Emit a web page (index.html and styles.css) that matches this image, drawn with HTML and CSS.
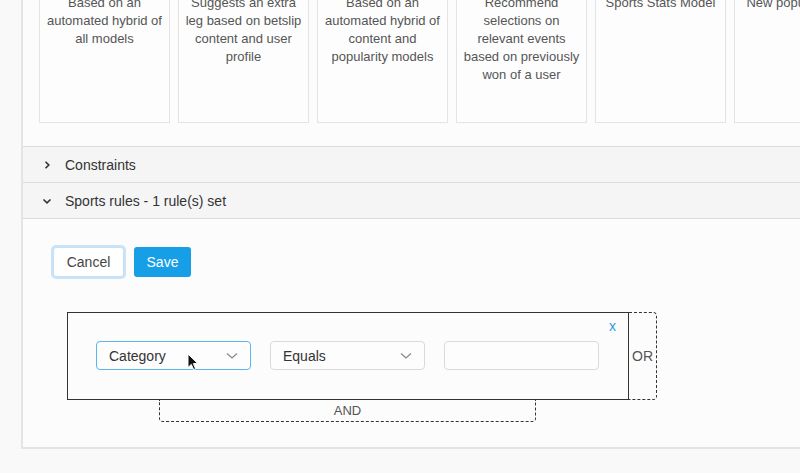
FILE: index.html
```html
<!DOCTYPE html>
<html lang="en">
<head>
  <meta charset="UTF-8">
  <title>Recommendation settings</title>
  <link rel="stylesheet" href="styles.css">
</head>
<body>
<div class="panel">

  <!-- model cards -->
  <div class="cards">
    <div class="card">Based on an automated hybrid of all models</div>
    <div class="card">Suggests an extra leg based on betslip content and user profile</div>
    <div class="card">Based on an automated hybrid of content and popularity models</div>
    <div class="card">Recommend selections on relevant events based on previously won of a user</div>
    <div class="card">Sports Stats Model</div>
    <div class="card">New popular picks</div>
  </div>

  <!-- accordion -->
  <div class="acc-header">
    <svg class="chev" width="10" height="10" viewBox="0 0 10 10"><path d="M3.5 1.8 L6.8 5 L3.5 8.2" fill="none" stroke="#333" stroke-width="1.6"/></svg>
    <span>Constraints</span>
  </div>
  <div class="acc-header open">
    <svg class="chev" width="10" height="10" viewBox="0 0 10 10"><path d="M1.5 3.5 L5 6.8 L8.5 3.5" fill="none" stroke="#333" stroke-width="1.6"/></svg>
    <span>Sports rules - 1 rule(s) set</span>
  </div>

  <div class="acc-body">
    <div class="actions">
      <button class="btn btn-cancel">Cancel</button>
      <button class="btn btn-save">Save</button>
    </div>

    <div class="rules">
      <div class="rule-row">
        <div class="rule-box">
          <span class="rule-close">x</span>
          <div class="select focused">
            <span>Category</span>
            <svg width="12" height="8" viewBox="0 0 12 8"><path d="M1 1.5 L6 6 L11 1.5" fill="none" stroke="#8a8a8a" stroke-width="1.3"/></svg>
          </div>
          <div class="select">
            <span>Equals</span>
            <svg width="12" height="8" viewBox="0 0 12 8"><path d="M1 1.5 L6 6 L11 1.5" fill="none" stroke="#8a8a8a" stroke-width="1.3"/></svg>
          </div>
          <div class="select text-input"></div>
        </div>
        <div class="or-box">OR</div>
      </div>
      <div class="and-box">AND</div>
    </div>
  </div>

</div>

<!-- mouse pointer -->
<svg class="cursor" width="12" height="18" viewBox="0 0 12 18">
  <path d="M1 1 L1 14.5 L4.3 11.4 L6.6 16.6 L8.6 15.7 L6.4 10.6 L10.8 10.6 Z" fill="#111" stroke="#fff" stroke-width="1"/>
</svg>
</body>
</html>
```

FILE: styles.css
```css
body {
  margin: 0;
  font-family: "Liberation Sans", Arial, sans-serif;
  background-color: #f9f9f9;
  overflow: hidden;
  position: relative;
}

.panel {
  margin-left: 21px;
  width: 820px;
  background-color: #fcfcfc;
  border-left: 2px solid #e4e4e4;
  border-bottom: 2px solid #e4e4e4;
}

/* cards are scrolled partly out of view */
.cards {
  display: flex;
  gap: 8px;
  padding: 0 16px;
  margin-top: -40px;
}

.card {
  flex: 0 0 131px;
  box-sizing: border-box;
  height: 163px;
  padding: 33px 3px 0;
  background-color: #fdfdfd;
  border: 1px solid #e4e4e4;
  color: #555;
  font-size: 13px;
  line-height: 18px;
  text-align: center;
}

.acc-header {
  display: flex;
  align-items: center;
  height: 35px;
  background-color: #f5f5f5;
  border-top: 1px solid #dcdcdc;
  color: #333;
  font-size: 14px;
}

.cards + .acc-header {
  margin-top: 23px;
}

.acc-header.open {
  border-bottom: 1px solid #dcdcdc;
}

.chev {
  margin-left: 19px;
  margin-right: 13px;
}

.acc-body {
  padding: 28px 30px 25px;
}

.actions {
  display: flex;
  gap: 10px;
  align-items: center;
}

.btn {
  font-family: inherit;
  font-size: 14px;
  height: 30px;
  border-radius: 3px;
  cursor: pointer;
}

.btn-cancel {
  width: 71px;
  background-color: #fff;
  color: #444;
  border: 1px solid #c4e0f6;
  box-shadow: 0 0 0 2px #c9e4f8;
}

.btn-save {
  width: 57px;
  background-color: #169ee6;
  color: #fff;
  border: none;
}

.rules {
  margin-top: 35px;
  margin-left: 14px;
}

.rule-row {
  display: flex;
}

.rule-box {
  position: relative;
  box-sizing: border-box;
  width: 562px;
  height: 88px;
  display: flex;
  gap: 19px;
  padding: 28px 0 0 28px;
  border: 1px solid #333;
}

.rule-close {
  position: absolute;
  top: 5px;
  right: 12px;
  color: #2f9be0;
  font-size: 14px;
}

.select {
  box-sizing: border-box;
  width: 155px;
  height: 29px;
  display: flex;
  align-items: center;
  justify-content: space-between;
  padding: 0 12px 0 12px;
  background-color: #fdfdfd;
  border: 1px solid #dadada;
  border-radius: 4px;
  color: #333;
  font-size: 14px;
}

.select.focused {
  border-color: #5cb6ee;
}

.or-box {
  box-sizing: border-box;
  width: 28px;
  height: 88px;
  display: flex;
  align-items: center;
  justify-content: center;
  border: 1px dashed #333;
  border-left: none;
  border-radius: 0 4px 4px 0;
  color: #555;
  font-size: 14px;
}

.and-box {
  box-sizing: border-box;
  width: 377px;
  height: 22px;
  margin-left: 92px;
  display: flex;
  align-items: center;
  justify-content: center;
  border: 1px dashed #333;
  border-top: none;
  border-radius: 0 0 4px 4px;
  color: #555;
  font-size: 13px;
}

.cursor {
  position: absolute;
  left: 187px;
  top: 353px;
}
```
